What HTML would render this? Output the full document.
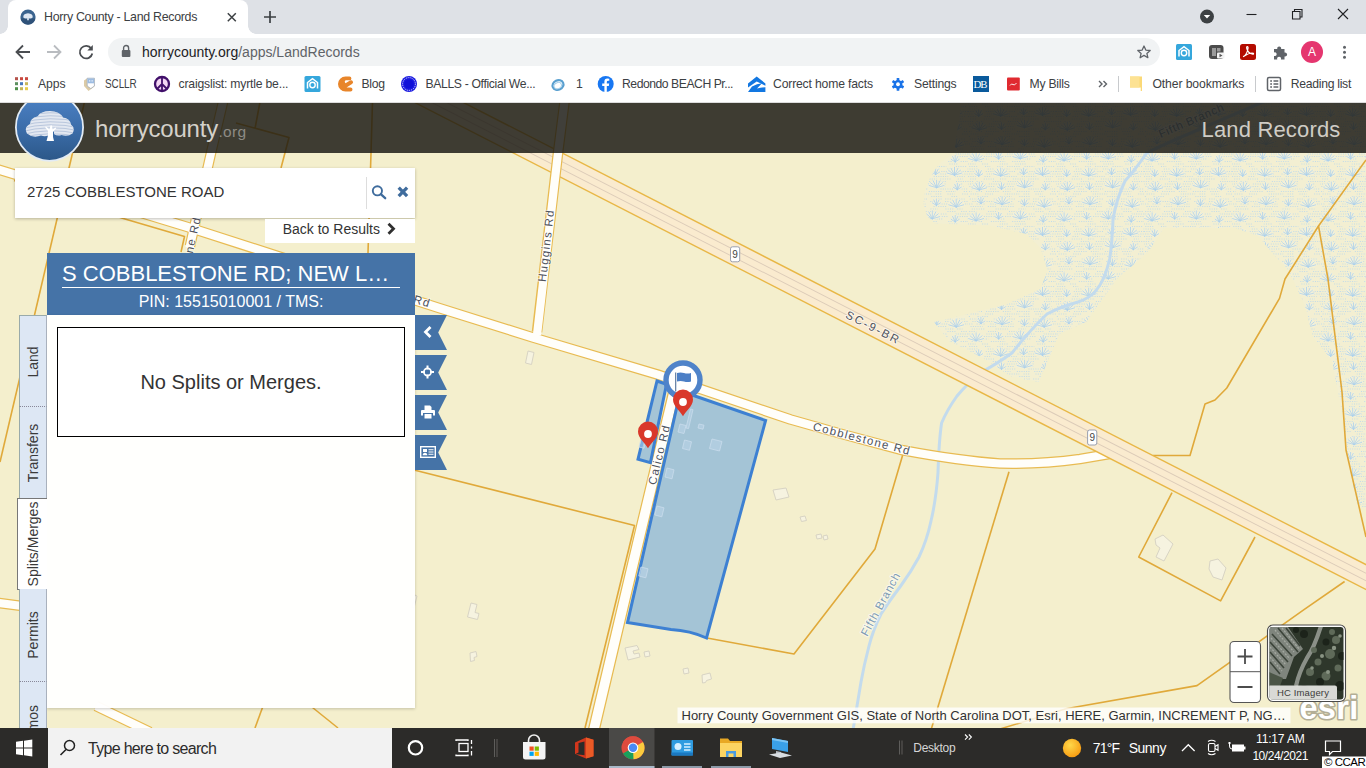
<!DOCTYPE html>
<html lang="en">
<head>
<meta charset="utf-8">
<title>Horry County - Land Records</title>
<style>
*{box-sizing:border-box;margin:0;padding:0}
html,body{width:1366px;height:768px;overflow:hidden;background:#f4efcd;font-family:"Liberation Sans",Arial,sans-serif}
body{position:relative}
.abs{position:absolute}
/* ---------- chrome ---------- */
#tabstrip{left:0;top:0;width:1366px;height:34px;background:#dee1e6}
#tab{left:8px;top:0;width:240px;height:34px;background:#fff;border-radius:8px 8px 0 0}
#tab:before,#tab:after{content:"";position:absolute;bottom:0;width:8px;height:8px;background:radial-gradient(circle at 0 0,rgba(255,255,255,0) 7.5px,#fff 8px)}
#tab:before{left:-8px}
#tab:after{right:-8px;transform:scaleX(-1)}
.ui{font-family:"Liberation Sans",Arial,sans-serif;color:#202124;white-space:nowrap}
#tabtitle{left:44px;top:10px;font-size:12.4px;color:#3c4043;letter-spacing:-0.3px}
#toolbar{left:0;top:34px;width:1366px;height:34px;background:#fff}
#omni{left:108px;top:38px;width:1052px;height:28px;border-radius:14px;background:#f1f3f4}
#url{left:142px;top:44px;font-size:14px;color:#202124;letter-spacing:-0.05px}
#url span{color:#5f6368}
#bookbar{left:0;top:68px;width:1366px;height:35px;background:#fff;border-bottom:1px solid #dcdcdc}
.bm{top:77px;font-size:12.2px;color:#3c4043;letter-spacing:-0.1px}
/* ---------- page ---------- */
#map{left:0;top:0;width:1366px;height:768px}
#hdr{left:0;top:103px;width:1366px;height:50px;background:rgba(22,21,16,.82)}
#brand{left:95px;top:114.500px;font-size:24px;color:#d4d1ca;letter-spacing:-0.22px}
#brand span{font-size:15.500px;color:#8d8b84;letter-spacing:0.3px;margin-left:0.5px}
#lr{right:25.500px;top:117px;font-size:22px;color:#cfccc5;letter-spacing:0.17px}
#search{left:15px;top:168px;width:400px;height:50px;background:#fff;box-shadow:0 1px 3px rgba(0,0,0,.25)}
#stext{left:27px;top:183px;font-size:15px;color:#333}
#sdiv{left:366px;top:177px;width:1px;height:32px;background:#ddd}
#back{left:265px;top:219px;width:150px;height:24px;background:#fff}
#backt{left:282.700px;top:221px;font-size:14px;color:#333}
#phead{left:47px;top:253px;width:368px;height:62px;background:#4573a7}
#ptitle{left:62px;top:260px;width:338px;height:28px;border-bottom:1px solid #fff;font-size:22px;color:#fff;line-height:27px;white-space:nowrap}
#ppin{left:47px;top:292px;width:368px;text-align:center;font-size:16px;color:#fff;line-height:20px}
#pbody{left:47px;top:315px;width:368px;height:393px;background:rgba(255,255,255,.96);box-shadow:0 1px 3px rgba(0,0,0,.2)}
#pbox{left:57px;top:327px;width:348px;height:110px;border:1px solid #000;background:#fff;text-align:center;line-height:108px;font-size:20px;color:#333}
.vtab{left:19px;width:28px;height:92px;background:#dde7f4;border-left:1px solid #9aa;border-right:1px solid #a9b1bd;border-top:1px dotted #889}
.vtab span,.vtabA span{position:absolute;left:50%;top:50%;transform:translate(-50%,-50%) rotate(-90deg);font-size:14px;color:#3a3a3a;white-space:nowrap}
.vtabA{left:17px;width:30px;height:92px;background:#fff;border:1px solid #777;border-right:none}
.flag{left:415px;width:32px;height:35px}
/* ---------- taskbar ---------- */
#task{left:0;top:728px;width:1366px;height:40px;background:#2c2b29}
#tsearch{left:48px;top:728px;width:344px;height:40px;background:#f2f2f2}
#tst{left:88px;top:739.500px;font-size:16px;color:#2b2b2b;letter-spacing:-0.7px}
.tt{color:#fff;font-size:12px;white-space:nowrap}
#b2{transform:scaleX(.815);transform-origin:0 0}
#b3{letter-spacing:-0.2px}
#b4{letter-spacing:-0.35px}
#b5{letter-spacing:-0.34px}
#b7{letter-spacing:-0.47px}
#b8{letter-spacing:-0.17px}
#b9{letter-spacing:-0.2px}
#b10{letter-spacing:-0.25px}
#b12{letter-spacing:-0.28px}
#url{letter-spacing:0}
</style>
</head>
<body>
<!-- MAP -->
<svg id="map" class="abs" viewBox="0 0 1366 768">
<rect x="0" y="0" width="1366" height="768" fill="#f4efcd"/>
<g id="mapcontent">
<defs>
<path id="hwy" d="M400,82.500 L1400,594.500"/>
<pattern id="marsh" x="0" y="0" width="88" height="60" patternUnits="userSpaceOnUse">
 <rect width="88" height="60" fill="#f1f0de" fill-opacity="0.250"/>
 <path d="M-0.5,1.5 h5.6 M8.6,1.5 h7.1 M24.8,1.5 h9.3 M39.9,1.5 h10.9 M57.9,1.5 h8.0 M76.0,1.5 h12.0 M-0.3,4.0 h10.3 M20.9,4.0 h12.3 M38.8,4.0 h14.8 M57.6,4.0 h9.2 M76.6,4.0 h6.5 M-5.6,6.5 h11.7 M16.0,6.5 h10.7 M37.6,6.5 h8.1 M55.0,6.5 h10.9 M74.1,6.5 h9.6 M3.4,9.0 h9.7 M22.2,9.0 h5.6 M37.1,9.0 h11.5 M60.5,9.0 h13.2 M79.3,9.0 h8.9 M-5.8,11.5 h9.6 M8.4,11.5 h6.2 M18.1,11.5 h12.7 M34.9,11.5 h7.5 M48.9,11.5 h13.7 M66.3,11.5 h9.5 M83.8,11.5 h13.8 M2.6,14.0 h7.8 M17.2,14.0 h8.6 M36.7,14.0 h14.6 M55.6,14.0 h6.8 M67.5,14.0 h7.3 M82.2,14.0 h10.9 M-6.0,16.5 h9.2 M9.6,16.5 h10.7 M31.8,16.5 h11.9 M51.3,16.5 h11.2 M71.6,16.5 h5.5 M1.8,19.0 h13.7 M25.7,19.0 h8.9 M41.2,19.0 h6.0 M56.0,19.0 h5.6 M65.2,19.0 h7.1 M76.8,19.0 h8.4 M-6.0,21.5 h6.5 M4.4,21.5 h8.6 M16.3,21.5 h13.7 M38.6,21.5 h6.5 M50.3,21.5 h8.5 M65.1,21.5 h6.2 M81.9,21.5 h14.9 M-1.2,24.0 h5.9 M8.6,24.0 h8.4 M22.4,24.0 h13.3 M40.2,24.0 h5.2 M57.0,24.0 h10.3 M71.6,24.0 h10.4 M85.2,24.0 h10.3 M2.6,26.5 h12.0 M19.9,26.5 h8.7 M33.1,26.5 h12.7 M53.6,26.5 h12.8 M72.4,26.5 h7.2 M3.8,29.0 h13.5 M27.6,29.0 h13.2 M50.5,29.0 h7.3 M65.4,29.0 h8.6 M77.2,29.0 h5.3 M-3.4,31.5 h11.9 M20.1,31.5 h9.5 M41.0,31.5 h14.9 M67.5,31.5 h8.6 M81.1,31.5 h7.3 M-4.0,34.0 h11.2 M18.4,34.0 h13.4 M39.1,34.0 h11.5 M60.8,34.0 h5.8 M75.6,34.0 h14.1 M1.5,36.5 h9.8 M15.9,36.5 h12.9 M34.8,36.5 h13.0 M59.5,36.5 h9.0 M75.1,36.5 h14.5 M-4.3,39.0 h6.3 M6.3,39.0 h14.0 M30.6,39.0 h6.5 M47.5,39.0 h14.8 M71.3,39.0 h8.5 M87.7,39.0 h6.3 M3.7,41.5 h11.5 M22.9,41.5 h14.3 M44.2,41.5 h13.7 M68.3,41.5 h7.1 M80.7,41.5 h7.9 M-0.1,44.0 h7.6 M14.2,44.0 h6.3 M31.7,44.0 h8.5 M47.4,44.0 h10.8 M69.4,44.0 h9.2 M-1.0,46.5 h10.3 M17.0,46.5 h5.2 M29.2,46.5 h6.8 M39.1,46.5 h13.0 M56.6,46.5 h9.7 M75.9,46.5 h10.6 M-0.8,49.0 h10.6 M19.8,49.0 h6.1 M33.9,49.0 h7.5 M46.9,49.0 h12.7 M67.2,49.0 h10.6 M87.6,49.0 h14.1 M0.1,51.5 h10.1 M17.8,51.5 h11.9 M36.8,51.5 h10.3 M54.4,51.5 h14.4 M78.1,51.5 h13.8 M-3.4,54.0 h10.6 M18.7,54.0 h13.4 M36.3,54.0 h6.2 M49.5,54.0 h5.7 M60.4,54.0 h5.7 M75.2,54.0 h12.8 M-4.5,56.5 h12.2 M16.6,56.5 h6.4 M34.0,56.5 h14.7 M53.7,56.5 h14.5 M74.8,56.5 h9.9 M2.3,59.0 h6.6 M15.8,59.0 h10.2 M32.0,59.0 h7.0 M44.9,59.0 h12.2 M60.3,59.0 h10.5 M77.8,59.0 h5.2" stroke="#bcd9ec" stroke-width="0.900" stroke-dasharray="1 1.300" fill="none"/>
 <path d="M11.3,10.0 l-7.5,-2.2 M11.3,10.0 l-6.0,-5.0 M11.3,10.0 l-3.5,-7.0 M11.3,10.0 l0.0,-8.0 M11.3,10.0 l3.5,-7.0 M11.3,10.0 l6.0,-5.0 M11.3,10.0 l7.5,-2.2 M56.6,7.7 l-7.5,-2.2 M56.6,7.7 l-6.0,-5.0 M56.6,7.7 l-3.5,-7.0 M56.6,7.7 l0.0,-8.0 M56.6,7.7 l3.5,-7.0 M56.6,7.7 l6.0,-5.0 M56.6,7.7 l7.5,-2.2 M34.1,24.6 l-7.5,-2.2 M34.1,24.6 l-6.0,-5.0 M34.1,24.6 l-3.5,-7.0 M34.1,24.6 l0.0,-8.0 M34.1,24.6 l3.5,-7.0 M34.1,24.6 l6.0,-5.0 M34.1,24.6 l7.5,-2.2 M76.2,27.0 l-7.5,-2.2 M76.2,27.0 l-6.0,-5.0 M76.2,27.0 l-3.5,-7.0 M76.2,27.0 l0.0,-8.0 M76.2,27.0 l3.5,-7.0 M76.2,27.0 l6.0,-5.0 M76.2,27.0 l7.5,-2.2 M8.1,40.8 l-7.5,-2.2 M8.1,40.8 l-6.0,-5.0 M8.1,40.8 l-3.5,-7.0 M8.1,40.8 l0.0,-8.0 M8.1,40.8 l3.5,-7.0 M8.1,40.8 l6.0,-5.0 M8.1,40.8 l7.5,-2.2 M52.3,38.8 l-7.5,-2.2 M52.3,38.8 l-6.0,-5.0 M52.3,38.8 l-3.5,-7.0 M52.3,38.8 l0.0,-8.0 M52.3,38.8 l3.5,-7.0 M52.3,38.8 l6.0,-5.0 M52.3,38.8 l7.5,-2.2 M32.7,56.0 l-7.5,-2.2 M32.7,56.0 l-6.0,-5.0 M32.7,56.0 l-3.5,-7.0 M32.7,56.0 l0.0,-8.0 M32.7,56.0 l3.5,-7.0 M32.7,56.0 l6.0,-5.0 M32.7,56.0 l7.5,-2.2 M74.5,55.2 l-7.5,-2.2 M74.5,55.2 l-6.0,-5.0 M74.5,55.2 l-3.5,-7.0 M74.5,55.2 l0.0,-8.0 M74.5,55.2 l3.5,-7.0 M74.5,55.2 l6.0,-5.0 M74.5,55.2 l7.5,-2.2" stroke="#f4f1da" stroke-width="2.400" fill="none" stroke-linecap="round"/>
 <path d="M33.5,9.3 l-4.0,-2.5 M33.5,9.3 l-2.6,-5.5 M33.5,9.3 l0.0,-6.5 M33.5,9.3 l2.6,-5.5 M33.5,9.3 l4.0,-2.5 M77.3,9.7 l-4.0,-2.5 M77.3,9.7 l-2.6,-5.5 M77.3,9.7 l0.0,-6.5 M77.3,9.7 l2.6,-5.5 M77.3,9.7 l4.0,-2.5 M12.9,23.6 l-4.0,-2.5 M12.9,23.6 l-2.6,-5.5 M12.9,23.6 l0.0,-6.5 M12.9,23.6 l2.6,-5.5 M12.9,23.6 l4.0,-2.5 M56.4,25.4 l-4.0,-2.5 M56.4,25.4 l-2.6,-5.5 M56.4,25.4 l0.0,-6.5 M56.4,25.4 l2.6,-5.5 M56.4,25.4 l4.0,-2.5 M30.6,38.9 l-4.0,-2.5 M30.6,38.9 l-2.6,-5.5 M30.6,38.9 l0.0,-6.5 M30.6,38.9 l2.6,-5.5 M30.6,38.9 l4.0,-2.5 M75.2,41.9 l-4.0,-2.5 M75.2,41.9 l-2.6,-5.5 M75.2,41.9 l0.0,-6.5 M75.2,41.9 l2.6,-5.5 M75.2,41.9 l4.0,-2.5 M10.7,56.2 l-4.0,-2.5 M10.7,56.2 l-2.6,-5.5 M10.7,56.2 l0.0,-6.5 M10.7,56.2 l2.6,-5.5 M10.7,56.2 l4.0,-2.5 M55.6,54.6 l-4.0,-2.5 M55.6,54.6 l-2.6,-5.5 M55.6,54.6 l0.0,-6.5 M55.6,54.6 l2.6,-5.5 M55.6,54.6 l4.0,-2.5" stroke="#f4f1da" stroke-width="2.200" fill="none" stroke-linecap="round"/>
 <path d="M11.3,10.0 l-7.5,-2.2 M11.3,10.0 l-6.0,-5.0 M11.3,10.0 l-3.5,-7.0 M11.3,10.0 l0.0,-8.0 M11.3,10.0 l3.5,-7.0 M11.3,10.0 l6.0,-5.0 M11.3,10.0 l7.5,-2.2 M56.6,7.7 l-7.5,-2.2 M56.6,7.7 l-6.0,-5.0 M56.6,7.7 l-3.5,-7.0 M56.6,7.7 l0.0,-8.0 M56.6,7.7 l3.5,-7.0 M56.6,7.7 l6.0,-5.0 M56.6,7.7 l7.5,-2.2 M34.1,24.6 l-7.5,-2.2 M34.1,24.6 l-6.0,-5.0 M34.1,24.6 l-3.5,-7.0 M34.1,24.6 l0.0,-8.0 M34.1,24.6 l3.5,-7.0 M34.1,24.6 l6.0,-5.0 M34.1,24.6 l7.5,-2.2 M76.2,27.0 l-7.5,-2.2 M76.2,27.0 l-6.0,-5.0 M76.2,27.0 l-3.5,-7.0 M76.2,27.0 l0.0,-8.0 M76.2,27.0 l3.5,-7.0 M76.2,27.0 l6.0,-5.0 M76.2,27.0 l7.5,-2.2 M8.1,40.8 l-7.5,-2.2 M8.1,40.8 l-6.0,-5.0 M8.1,40.8 l-3.5,-7.0 M8.1,40.8 l0.0,-8.0 M8.1,40.8 l3.5,-7.0 M8.1,40.8 l6.0,-5.0 M8.1,40.8 l7.5,-2.2 M52.3,38.8 l-7.5,-2.2 M52.3,38.8 l-6.0,-5.0 M52.3,38.8 l-3.5,-7.0 M52.3,38.8 l0.0,-8.0 M52.3,38.8 l3.5,-7.0 M52.3,38.8 l6.0,-5.0 M52.3,38.8 l7.5,-2.2 M32.7,56.0 l-7.5,-2.2 M32.7,56.0 l-6.0,-5.0 M32.7,56.0 l-3.5,-7.0 M32.7,56.0 l0.0,-8.0 M32.7,56.0 l3.5,-7.0 M32.7,56.0 l6.0,-5.0 M32.7,56.0 l7.5,-2.2 M74.5,55.2 l-7.5,-2.2 M74.5,55.2 l-6.0,-5.0 M74.5,55.2 l-3.5,-7.0 M74.5,55.2 l0.0,-8.0 M74.5,55.2 l3.5,-7.0 M74.5,55.2 l6.0,-5.0 M74.5,55.2 l7.5,-2.2" stroke="#acd0eb" stroke-width="0.800" fill="none" stroke-linecap="round"/>
 <path d="M33.5,9.3 l-4.0,-2.5 M33.5,9.3 l-2.6,-5.5 M33.5,9.3 l0.0,-6.5 M33.5,9.3 l2.6,-5.5 M33.5,9.3 l4.0,-2.5 M77.3,9.7 l-4.0,-2.5 M77.3,9.7 l-2.6,-5.5 M77.3,9.7 l0.0,-6.5 M77.3,9.7 l2.6,-5.5 M77.3,9.7 l4.0,-2.5 M12.9,23.6 l-4.0,-2.5 M12.9,23.6 l-2.6,-5.5 M12.9,23.6 l0.0,-6.5 M12.9,23.6 l2.6,-5.5 M12.9,23.6 l4.0,-2.5 M56.4,25.4 l-4.0,-2.5 M56.4,25.4 l-2.6,-5.5 M56.4,25.4 l0.0,-6.5 M56.4,25.4 l2.6,-5.5 M56.4,25.4 l4.0,-2.5 M30.6,38.9 l-4.0,-2.5 M30.6,38.9 l-2.6,-5.5 M30.6,38.9 l0.0,-6.5 M30.6,38.9 l2.6,-5.5 M30.6,38.9 l4.0,-2.5 M75.2,41.9 l-4.0,-2.5 M75.2,41.9 l-2.6,-5.5 M75.2,41.9 l0.0,-6.5 M75.2,41.9 l2.6,-5.5 M75.2,41.9 l4.0,-2.5 M10.7,56.2 l-4.0,-2.5 M10.7,56.2 l-2.6,-5.5 M10.7,56.2 l0.0,-6.5 M10.7,56.2 l2.6,-5.5 M10.7,56.2 l4.0,-2.5 M55.6,54.6 l-4.0,-2.5 M55.6,54.6 l-2.6,-5.5 M55.6,54.6 l0.0,-6.5 M55.6,54.6 l2.6,-5.5 M55.6,54.6 l4.0,-2.5" stroke="#acd0eb" stroke-width="0.800" fill="none" stroke-linecap="round"/>
</pattern>
<clipPath id="wetclip">
 <path d="M962,100 L954,153 L940,163 L930.500,176 L925,190 L923.500,204 L927,216 L935,223.500 L989,225.500 L1026.500,234 L1040.600,248 L1047.600,270 L1040.600,289 L1005.500,304.700 L960,316 L934,322 L949,341 L981,357 L1012,377 L1039,382 L1059,334 L1086,322 L1117,279 L1148,252 L1164,228 L1235,228 L1258,236 L1274,255 L1289,271 L1305,306 L1313,337 L1332,361 L1344,423 L1349,465 L1357,503 L1366,510 L1366,100 Z"/>
</clipPath>
</defs>
<rect x="900" y="100" width="466" height="420" fill="url(#marsh)" clip-path="url(#wetclip)"/>
<!-- stream -->
<path d="M1270,99 L1200,129 Q1160,146 1146.700,153 Q1135,170 1125,181 Q1116,200 1113,220 Q1112,245 1109.600,259 Q1105,280 1096,290.600 Q1090,298 1078,302 Q1060,307 1047,314 Q1030,330 1012,353 Q995,365 980.600,372.600 Q966,385 957,396 Q947,410 941.600,423 Q939,440 938,472.500 Q936,500 931,521 Q927,540 919,557 Q911,572 901,585.500 Q890,600 881,614 Q873,630 869,646 Q864,665 861,682 Q858,700 853,730" fill="none" stroke="#c3dbed" stroke-width="3" stroke-linecap="round"/>
<!-- parcel lines -->
<g fill="none" stroke="#e0a93a" stroke-width="1.6" stroke-linejoin="round">
 <path d="M84.500,102 L0,462"/>
 <path d="M372.500,102 L371,153 L368,253"/>
 <path d="M260,102 L255,128.500 M236,123 L289,137.500 L281,168"/>
 <path d="M415,470.200 L634.500,525.500 L585,728"/>
 <path d="M903,454 L875,549 L794,654 L707,638"/>
 <path d="M1009,471.700 L931,730"/>
 <path d="M1172,492.700 L1138.700,557 L1220.600,600.900 L1255,537"/>
 <path d="M1344.600,581.500 L1304,609.700 L1197,685.600 L1066,708.700 L1000,729"/>
 <path d="M1366,160 L1318.500,226 L1285,279 L1279.500,298.400 L1226.800,388 L1215,400 L1205,404 L1190,455.500 L1153,455.500"/>
 <path d="M1318.500,226 L1328,279 L1338,360 L1342,392 L1346,450 L1366,537"/>
 <path d="M262.500,707.500 L255,728"/>
 <path d="M14,180.500 L122.400,218.200 L184.500,236.500 L181,252"/>
 <path d="M312.500,707.500 L338,728"/>
</g>
<!-- minor roads -->
<g fill="none" stroke-linecap="butt" stroke-linejoin="round">
 <g stroke="#e8bb52" stroke-width="10.600">
  <path id="cob" d="M-20,164 L187.500,227 L439,308 L533,337.500 L657.800,374.600 L790.600,419.500 L840,433.500 L903,450.300 Q960,461 1000,463.500 Q1040,464.500 1080,459 L1124,451.500"/>
  <path d="M223,102 L211,153 L190,246"/>
  <path d="M-5,602.500 L22,606"/>
  <path d="M96,706 L150,732"/>
 </g>
 <g stroke="#fffefa" stroke-width="8.200">
  <use href="#cob"/>
  <path d="M223,102 L211,153 L189.500,248"/>
  <path d="M-5,602.500 L22,606"/>
  <path d="M96,706 L150,732"/>
 </g>
</g>
<g fill="none">
 <path d="M675,388 L642,525.700 L594.500,727 L590,746" stroke="#e8bb52" stroke-width="12"/>
 <path d="M675.500,386 L642,525.700 L594.500,727 L590,746" stroke="#fffefa" stroke-width="9.600"/>
</g>
<!-- highway -->
<g fill="none">
 <path d="M400,82.500 L1400,594.500" stroke="#e8b746" stroke-width="23.600"/>
 
 <use href="#hwy" stroke="#faebcf" stroke-width="20.800"/>
 <use href="#hwy" stroke="#dccbb8" stroke-width="7.600"/>
 <use href="#hwy" stroke="#faebcf" stroke-width="5.800"/>
</g>

<g fill="none">
 <path d="M565,98 L558,153 L537,332" stroke="#e8bb52" stroke-width="10.600"/>
 <path d="M565,98 L558,153 L537,335" stroke="#fffefa" stroke-width="8.200"/>
</g>
<!-- buildings -->
<g fill="#f6f3e0" stroke="#d8d4c4" stroke-width="1">
 <path d="M528,351 l6,1.500 l-2.500,12 l-6,-1.500 z"/>
 <path d="M773,490 l13,-2 l3,9 l-13,3 z"/>
 <path d="M800,517 l5,-1 l1.500,4.500 l-5,1 z"/>
 <path d="M816,535 l5,-1 l1,4 l-5,1 z M823,536 l4,-1 l1,4 l-4,1 z"/>
 <path d="M471,603 l6,1.500 l-2,8 l4,1 l-1.500,6 l-10,-2.500 z"/>
 <path d="M470,653 l6,-1.500 l1,5 l-3,1 l0.500,3 l-4,1 z"/>
 <path d="M625,648 l12,-2.500 l2,4 l-6,1.500 l1,3 l5,-1 l1,4 l-12,3 z"/>
 <path d="M644,652 l5,-1 l1,5 l-5,1 z"/>
 <path d="M683,669 l5,-1 l1,5 l-5,1 z"/>
 <path d="M702,675 l8,-2 l1.500,6 l-5,1.500 l-1,2 l-3,0.500 z"/>
 <path d="M1155,539 l8,-4 l10,9 l-9,17 l-8,-4 l4,-9 l-4,-3 z"/>
 <path d="M1210,561 l8,-2 l8,9 l-4,12 l-9,-3 l-4,-8 z"/>
 <path d="M415,595 l2,1 l-3,12 l-2,-0.500 z"/>
</g>
<!-- road labels -->
<g font-family="Liberation Sans, Arial, sans-serif" font-size="11.500" fill="#4f535c" stroke="#ffffff" stroke-opacity="0.600" stroke-width="2" paint-order="stroke" stroke-linejoin="round" letter-spacing="1.300" text-anchor="middle">
 <text transform="translate(550,246) rotate(-83.400)">Huggins Rd</text>
 <text transform="translate(861,442.500) rotate(14.500)">Cobblestone Rd</text>
 <text transform="translate(663,455.500) rotate(-76.500)">Calico Rd</text>
 <text transform="translate(871.500,331) rotate(27)" letter-spacing="2">SC-9-BR</text>
 <text transform="translate(421,305) rotate(17.500)">Rd</text>
 <text transform="translate(201,217.500) rotate(-77)" text-anchor="end">Lone Pine Rd</text>
 <text transform="translate(884,606) rotate(-61.500)" fill="#7f9cb4" letter-spacing="0.700">Fifth Branch</text>
 <text transform="translate(1193,124) rotate(-23.500)" fill="#7f9cb4" letter-spacing="0.700">Fifth Branch</text>
</g>
<!-- shields -->
<g font-family="Liberation Sans, Arial, sans-serif" font-size="10" fill="#444" text-anchor="middle">
 <rect x="730.500" y="246.800" width="9.200" height="15" rx="2" fill="#fff" stroke="#8e96a8" stroke-width="0.900"/>
 <text x="735.100" y="258">9</text>
 <rect x="1087.600" y="430" width="9.200" height="15" rx="2" fill="#fff" stroke="#8e96a8" stroke-width="0.900"/>
 <text x="1092.200" y="441.200">9</text>
</g>
<!-- selected parcels -->
<g fill="#6ea6dc" fill-opacity="0.600" stroke="#3d80d2" stroke-width="3" stroke-linejoin="miter">
 <path d="M680.500,391 L765.600,420.500 L706.500,638 Q690,630.500 671,629.500 L627.500,622.600 Z"/>
 <path d="M657,381 L666.500,384.300 L650.400,462.700 L638,459.300 Z"/>
</g>
<g fill="#bcd6ea" fill-opacity="0.550" stroke="#c9dcec" stroke-opacity="0.800" stroke-width="1">
 <path d="M699,424 l5,1.200 l-1,4 l-5,-1.200z"/>
 <path d="M684.500,440 l7,1.800 l-2,8.500 l-7,-1.800z"/>
 <path d="M712,439 l10,2.500 l-2.500,9.500 l-10,-2.500z"/>
 <path d="M680,424 l6,1.500 l-2,8 l-6,-1.500z"/>
 <path d="M667,468 l7,1.800 l-2,9 l-7,-1.800z"/>
 <path d="M690.500,409 l2.500,0.600 l-4.500,19 l-2.500,-0.600z"/>
 <path d="M657,506 l7,1.800 l-2.200,9 l-7,-1.800z"/>
 <path d="M641,567 l7,1.800 l-2.200,9 l-7,-1.800z"/>
 <path d="M641.500,437 l5,1.300 l-2.500,10 l-5,-1.300z"/>
</g>
<!-- flag marker -->
<g>
 <circle cx="683" cy="380" r="17" fill="#ffffff" stroke="#4f83c9" stroke-width="5.400"/>
 <rect x="675" y="372.500" width="1.300" height="19" fill="#6b85a8"/>
 <path d="M677,373 q3.500,-1.200 7,0 t7,0 v8.500 q-3.500,1.200 -7,0 t-7,0 z" fill="#4c7fc6"/>
</g>
<!-- pins -->
<g id="pins">
 <path id="pin" d="M0,0 C-2.500,-5 -10,-10 -10,-16.800 A10,10 0 1 1 10,-16.800 C10,-10 2.500,-5 0,0 Z" fill="#d9382b" transform="translate(683,416.300)"/>
 <circle cx="683" cy="402" r="3.900" fill="#fff"/>
 <use href="#pin" x="-35" y="32"/>
 <circle cx="648" cy="434" r="3.900" fill="#fff"/>
</g>
</g>
</svg>

<!-- page header -->
<div id="hdr" class="abs"></div>
<div id="brand" class="abs">horrycounty<span>.org</span></div>
<div id="lr" class="abs">Land Records</div>

<!-- search -->
<div id="search" class="abs"></div>
<div id="stext" class="abs">2725 COBBLESTONE ROAD</div>
<div id="sdiv" class="abs"></div>
<div id="back" class="abs"></div>
<div id="backt" class="abs">Back to Results</div>

<!-- panel -->
<div id="phead" class="abs"></div>
<div id="ptitle" class="abs">S COBBLESTONE RD; NEW L…</div>
<div id="ppin" class="abs">PIN: 15515010001 / TMS:</div>
<div id="pbody" class="abs"></div>
<div id="pbox" class="abs">No Splits or Merges.</div>
<div class="abs vtab" style="top:315px;border-top:1px solid #9aa"><span>Land</span></div>
<div class="abs vtab" style="top:406px"><span>Transfers</span></div>
<div class="abs vtabA" style="top:498px"><span>Splits/Merges</span></div>
<div class="abs vtab" style="top:589px;border-top:none"><span>Permits</span></div>
<div class="abs vtab" style="top:681px;height:47px;overflow:hidden"><span style="top:46px">Memos</span></div>


<!-- overlay icons -->
<svg class="abs" style="left:0;top:102px" width="1366" height="626" viewBox="0 102 1366 626">
 <defs>
  <linearGradient id="lg" x1="0" y1="0" x2="0" y2="1"><stop offset="0" stop-color="#4c82c6"/><stop offset="0.550" stop-color="#3b6ca8"/><stop offset="1" stop-color="#2b5788"/></linearGradient>
  <clipPath id="canopy"><path d="M27,133.500 q-3.500,-6 3,-9.500 q0,-6 7.500,-7.500 q3,-5.500 12.500,-5.500 q9.500,0 13,6.500 q7,1 8,7 q4.500,3.500 1.500,9 q-5,3.500 -11,1.500 q-4,1.500 -7.500,-1 l0,-3 q-2,1 -4,1 l0,2.500 q-4,3 -9,1 q-8,3 -14,-2z"/></clipPath>
 </defs>
 <circle cx="49.500" cy="127.200" r="33.600" fill="url(#lg)" stroke="#e2ebf5" stroke-width="1.800"/>
 <g clip-path="url(#canopy)">
  <rect x="20" y="105" width="60" height="40" fill="#e3e8f1"/>
  <g stroke="#b4c3da" stroke-width="0.900" fill="none">
   <path d="M20,117 q30,-8 60,-1 M20,120 q30,-8 60,-1 M20,123 q30,-8 60,-1 M20,126 q30,-8 60,-1 M20,129 q30,-8 60,-1 M20,132 q30,-8 60,-1 M20,135 q30,-8 60,-1 M20,138 q30,-8 60,-1 M20,114 q30,-8 60,-1"/>
  </g>
 </g>
 <path d="M46.500,141 q2,-5 1.500,-10 l-3,-4 l1,-0.500 l3.500,3 l1,-4 l1.500,0 l0.500,4 l3,-2 l0.800,0.800 l-3.300,3.700 q-0.500,5 1,9z" fill="#ffffff"/>
 <!-- search icons -->
 <circle cx="377.400" cy="190.800" r="4.600" fill="none" stroke="#3f6c9d" stroke-width="1.900"/>
 <path d="M380.800,194.200 l4.400,4" stroke="#3f6c9d" stroke-width="2.300" stroke-linecap="round"/>
 <path d="M398.700,187.700 l8.400,8.400 M407.100,187.700 l-8.400,8.400" stroke="#3f6c9d" stroke-width="3.300"/>
 <path d="M388.500,223.800 l5,5 l-5,5" stroke="#2f2f2f" stroke-width="2.800" fill="none"/>
 <!-- flag buttons -->
 <g fill="#4573a7">
  <path d="M415,315 h32 l-8.800,17.500 l8.800,17.500 h-32z"/>
  <path d="M415,355 h32 l-8.800,17.500 l8.800,17.500 h-32z"/>
  <path d="M415,395 h32 l-8.800,17.500 l8.800,17.500 h-32z"/>
  <path d="M415,435 h32 l-8.800,17.500 l8.800,17.500 h-32z"/>
 </g>
 <path d="M430.500,327 l-5,5 l5,5" stroke="#fff" stroke-width="2.800" fill="none"/>
 <g stroke="#fff" fill="none">
  <circle cx="427.500" cy="372" r="3.600" stroke-width="1.700"/>
  <path d="M427.500,365.500 v4 M427.500,374.500 v4 M421,372 h4 M430,372 h4" stroke-width="2"/>
 </g>
 <g fill="#fff">
  <path d="M424.500,405.500 h5.500 l1.500,1.500 v3 h-7z"/>
  <path d="M422,410 h12 q1,0 1,1 v4.500 h-2 v-2.500 h-10 v2.500 h-2 v-4.500 q0,-1 1,-1z"/>
  <path d="M424.500,414 h7 v4.500 h-7z"/>
 </g>
 <g>
  <rect x="420.700" y="446.700" width="14.600" height="10.600" fill="none" stroke="#fff" stroke-width="1.400"/>
  <path d="M423,449 h4 v3 h-4z M422.700,455.300 q0,-2.600 2.300,-2.600 q2.300,0 2.300,2.600z" fill="#fff"/>
  <path d="M428.500,449.700 h5 M428.500,452 h5 M428.500,454.300 h5" stroke="#fff" stroke-width="1.100"/>
 </g>
 <!-- zoom control -->
 <rect x="1230" y="641.500" width="30.500" height="61" rx="4" fill="#fff" stroke="#555" stroke-width="1.100"/>
 <path d="M1230,671.700 h30.500" stroke="#555" stroke-width="1"/>
 <path d="M1237.500,656.500 h15 M1245,649 v15 M1237.500,687 h15" stroke="#4c4c4c" stroke-width="1.800"/>
 <!-- esri -->
 <text x="1299.500" y="719.300" font-family="Liberation Sans, Arial, sans-serif" font-weight="bold" font-size="32.500" fill="#fff" stroke="#a29d87" stroke-opacity="0.800" stroke-width="3.200" paint-order="stroke" stroke-linejoin="round" letter-spacing="0.300">esri</text>
 <!-- basemap toggle -->
 <defs><clipPath id="bmclip"><rect x="1269.500" y="627" width="74" height="72.500" rx="3"/></clipPath></defs>
 <rect x="1267.500" y="625" width="78" height="76.500" rx="5.500" fill="#fff" stroke="#4a4a4a" stroke-width="1.100"/>
 <g clip-path="url(#bmclip)">
  <rect x="1269" y="626.500" width="75" height="74" fill="#2e372b"/>
  <path d="M1269,627 h19 l15,22 l-9,8 l-8,22 h-17z" fill="#7f857d"/>
  <g stroke="#3c443a" stroke-width="1.600" fill="none">
   <path d="M1272,634 l20,22 M1270,642 l18,20 M1270,652 l14,16 M1270,662 l10,12 M1278,628 l20,24 M1286,628 l14,18"/>
  </g>
  <g stroke="#a5aaa2" stroke-width="1.200" fill="none" stroke-dasharray="2 1.500">
   <path d="M1271,638 l19,21 M1270,647 l16,18 M1270,657 l12,14 M1282,628 l18,22 M1275,630 l19,22"/>
  </g>
  <path d="M1269,672 l14,6 l-3,8 h-11z" fill="#4b5546"/>
  <path d="M1321,626 q-7,22 -14,32 q-8,14 -11,28" stroke="#8b9088" stroke-width="4.200" fill="none"/>
  <g fill="#5f6a59">
   <circle cx="1310" cy="672" r="4"/><circle cx="1318" cy="662" r="3.500"/><circle cx="1330" cy="654" r="5"/><circle cx="1336" cy="640" r="4"/><circle cx="1326" cy="676" r="4.500"/><circle cx="1338" cy="668" r="3.500"/><circle cx="1314" cy="650" r="3"/><circle cx="1332" cy="632" r="3"/>
  </g>
  <g fill="#8a9484">
   <circle cx="1312" cy="668" r="1.800"/><circle cx="1322" cy="656" r="2"/><circle cx="1334" cy="648" r="2.200"/><circle cx="1328" cy="672" r="2"/><circle cx="1340" cy="636" r="1.800"/>
  </g>
  <g fill="#1c231a">
   <circle cx="1304" cy="634" r="4"/><circle cx="1296" cy="630" r="3"/><circle cx="1342" cy="656" r="4"/><circle cx="1320" cy="682" r="4"/><circle cx="1304" cy="690" r="5"/><circle cx="1340" cy="686" r="5"/><circle cx="1326" cy="642" r="3.500"/>
  </g>
 </g>
 <path d="M1269.500,685.500 h65.500 q2,0 2,2 v12 h-65 q-2.500,0 -2.500,-2.500z" fill="#f1f1ee" fill-opacity="0.880"/>
 <text x="1303" y="696.200" font-family="Liberation Sans, Arial, sans-serif" font-size="9.500" fill="#3c3c3c" text-anchor="middle" letter-spacing="0.150">HC Imagery</text>
 <!-- attribution -->
 <rect x="677.500" y="707.500" width="613" height="15.800" fill="#fff" fill-opacity="0.800"/>
</svg>
<div id="attr" class="abs ui" style="left:681.500px;top:707.500px;font-size:13px;color:#323232;line-height:16px">Horry County Government GIS, State of North Carolina DOT, Esri, HERE, Garmin, INCREMENT P, NG…</div>

<!-- chrome -->
<div id="tabstrip" class="abs"></div>
<div id="tab" class="abs"></div>
<div id="tabtitle" class="abs ui">Horry County - Land Records</div>
<div id="toolbar" class="abs"></div>
<div id="omni" class="abs"></div>
<div id="url" class="abs ui">horrycounty.org<span>/apps/LandRecords</span></div>
<div id="bookbar" class="abs"></div>


<!-- tab strip icons -->
<svg class="abs" style="left:0;top:0" width="1366" height="102" viewBox="0 0 1366 102">
 <!-- favicon -->
 <circle cx="28" cy="17" r="7.600" fill="#3b648f"/><path d="M20.600,18.500 a7.500,7.500 0 0 0 14.800,0z" fill="#2f5279"/>
 <path transform="translate(28,17.300) scale(0.820) translate(-26,-17.800)" d="M20.500,18.500 q-1,-4 3,-5 q2.500,-1.500 5,0 q4,1 3,5 q-2,1.500 -4.500,0.500 l0,2.500 h-2 l0,-2.500 q-2.500,1 -4.500,-0.500z" fill="#dfe8f3"/>
 <!-- tab close -->
 <path d="M227.800,13.200 l8,8 M235.800,13.200 l-8,8" stroke="#3c4043" stroke-width="1.500" fill="none"/>
 <!-- new tab -->
 <path d="M264,17 h12 M270,11 v12" stroke="#3c4043" stroke-width="1.700" fill="none"/>
 <!-- tab search -->
 <circle cx="1207" cy="16.600" r="7" fill="#3c4043"/>
 <path d="M1203.800,15 h6.400 l-3.200,3.600z" fill="#fff"/>
 <!-- window controls -->
 <path d="M1246.500,14.500 h10" stroke="#202124" stroke-width="1.100"/>
 <path d="M1292.500,11.500 h7.500 v7.500 h-7.500z M1294.500,11.500 v-2 h7.500 v7.500 h-2" stroke="#202124" stroke-width="1.100" fill="none"/>
 <path d="M1338,9 l10,10 M1348,9 l-10,10" stroke="#202124" stroke-width="1.100" fill="none"/>
 <!-- nav -->
 <g stroke="#4a4d51" stroke-width="1.800" fill="none">
  <path d="M30,52 H17 M23,45.500 L16.500,52 L23,58.500"/>
  <path d="M47,52 H60 M54,45.500 L60.500,52 L54,58.500" stroke="#b9bcc0"/>
  <path d="M91.300,48.500 A6.300,6.300 0 1 0 92.300,53.500"/>
 </g>
 <path d="M92.800,45 v5.500 h-5.500z" fill="#4a4d51"/>
 <!-- lock -->
 <rect x="121.800" y="50" width="8.600" height="7" rx="1" fill="#5f6368"/>
 <path d="M123.600,50 v-2 a2.500,2.500 0 0 1 5,0 v2" stroke="#5f6368" stroke-width="1.400" fill="none"/>
 <!-- star -->
 <path transform="translate(1144,52.300) scale(0.860) translate(-1144,-52.300)" d="M1144,45 l2.100,4.700 l5.100,0.500 l-3.850,3.400 l1.150,5 l-4.500,-2.700 l-4.500,2.700 l1.150,-5 l-3.850,-3.400 l5.100,-0.500z" stroke="#5f6368" stroke-width="1.500" fill="none" stroke-linejoin="round"/>
 <!-- ext: blue -->
 <rect x="1176" y="44" width="16" height="16" rx="1.500" fill="#35a7dc"/>
 <path d="M1179,56.500 v-6 l5,-3.800 l5,3.800 v6" stroke="#fff" stroke-width="1.500" fill="none"/>
 <circle cx="1184" cy="53" r="2.700" stroke="#fff" stroke-width="1.400" fill="none"/>
 <!-- ext: grey -->
 <rect x="1209" y="45" width="14.500" height="14" rx="3" fill="#4b4b4b"/>
 <path d="M1212,48 h4 v8 h-4z M1217,48 h3.500 v3.500 h-3.500z" fill="#9a9a9a"/>
 <rect x="1217" y="52.500" width="7.500" height="6" rx="1" fill="#f3f3f3"/>
 <path d="M1219.500,53.800 l3,1.700 l-3,1.700z" fill="#555"/>
 <!-- ext: red pdf -->
 <rect x="1240" y="44" width="16" height="16" rx="2.500" fill="#b30b00"/>
 <path d="M1243.500,56.500 q3.500,-2 4.500,-8 q0.300,-1.800 -0.700,-1.800 q-1,0 -0.500,2 q1,4.500 6,5.500 q1.200,0 0.500,-1 q-3,-1 -9.800,3.300z" stroke="#fff" stroke-width="1.200" fill="none" stroke-linejoin="round"/>
 <!-- puzzle -->
 <path d="M1274,49 h3.300 a2,2 0 1 1 3.800,0 h3.400 v3.600 a2,2 0 1 1 0,3.800 v3.100 h-3.600 a2,2 0 1 0 -3.600,0 h-3.300 v-3.600 a1.900,1.900 0 1 0 0,-3.500z" fill="#5f6368"/>
 <!-- avatar -->
 <circle cx="1312" cy="52" r="11" fill="#e5366f"/>
 <!-- menu -->
 <circle cx="1344.500" cy="47.300" r="1.500" fill="#5f6368"/><circle cx="1344.500" cy="52.300" r="1.500" fill="#5f6368"/><circle cx="1344.500" cy="57.300" r="1.500" fill="#5f6368"/>
 <!-- bookmark icons -->
 <g>
  <rect x="15" y="77.2" width="3" height="3" fill="#b5534b"/>
  <rect x="20" y="77.2" width="3" height="3" fill="#c9493f"/>
  <rect x="25" y="77.2" width="3" height="3" fill="#c9493f"/>
  <rect x="15" y="82.2" width="3" height="3" fill="#5c8f5f"/>
  <rect x="20" y="82.2" width="3" height="3" fill="#4878bd"/>
  <rect x="25" y="82.2" width="3" height="3" fill="#c9b659"/>
  <rect x="15" y="87.2" width="3" height="3" fill="#4f8f4a"/>
  <rect x="20" y="87.2" width="3" height="3" fill="#c4b45a"/>
  <rect x="25" y="87.2" width="3" height="3" fill="#e6cb4a"/>
 </g>
 <!-- scllr -->
 <path d="M84,80.500 l3.500,-2.500 h7 v8.500 l-6,4.500 l-4.500,-5z" fill="#dccba6"/>
 <path d="M87.200,78.200 h7.200 v7.800 l-3.600,2.600 l-3.600,-2.600z" fill="#fff" stroke="#9aa6b8" stroke-width="0.700"/>
 <path d="M87.500,78.500 h6.600 v4.800 h-6.600z" fill="#9dbce2"/>
 <path d="M89,80.200 h1.300 v1.300 h-1.300z M91.500,80.200 h1.300 v1.300 h-1.300z" fill="#e8f0fa"/>
 <!-- peace -->
 <circle cx="162" cy="84" r="7" fill="#f4d6f4" stroke="#41106a" stroke-width="2.300"/>
 <path d="M162,77 v14 M162,84 l-5,5 M162,84 l5,5" stroke="#41106a" stroke-width="1.800" fill="none"/>
 <!-- blue home cam -->
 <rect x="304.500" y="76" width="16" height="16" rx="1.500" fill="#35a7dc"/>
 <path d="M307.500,88.500 v-6 l5,-3.800 l5,3.800 v6" stroke="#fff" stroke-width="1.500" fill="none"/>
 <circle cx="312.500" cy="85" r="2.700" stroke="#fff" stroke-width="1.400" fill="none"/>
 <!-- blog e -->
 <path d="M345.500,76.500 a7.500,7.500 0 1 0 0,15 h5 a2,2 0 0 0 0,-4 h-4 l5.500,-3.500 a2,2 0 0 0 -2,-3.500 l-4.500,2.800 a2,2 0 0 1 0,-3 h4 a1.900,1.900 0 0 0 0,-3.800z" fill="#e8852a"/>
 <!-- balls -->
 <circle cx="409" cy="84" r="8" fill="#1a1ae0"/>
 <circle cx="409" cy="84" r="6.400" fill="none" stroke="#fff" stroke-width="0.800" stroke-dasharray="1.200 1"/>
 <circle cx="409" cy="84" r="4.600" fill="#1010d8"/>
 <!-- swirl -->
 <ellipse cx="558" cy="85" rx="5.600" ry="4.800" fill="none" stroke="#5aa0d0" stroke-width="2.200" transform="rotate(-25 558 85)"/>
 <ellipse cx="557.500" cy="85.500" rx="3.800" ry="3" fill="none" stroke="#a8d0ea" stroke-width="1" transform="rotate(-25 558 85)"/>
 <!-- facebook -->
 <circle cx="605.700" cy="84" r="8" fill="#1877f2"/>
 <path d="M606.800,92 v-6 h2 l0.400,-2.400 h-2.400 v-1.500 q0,-1.300 1.400,-1.300 h1.100 v-2.100 q-1,-0.200 -2,-0.200 q-2.900,0 -2.900,3 v2.100 h-2.200 v2.400 h2.200 v6z" fill="#fff"/>
 <!-- zillow -->
 <path d="M748,83.500 l8.700,-7 l8.700,7 v2.200 l-8.700,-4.200 l-8.700,6z" fill="#1277e1"/>
 <path d="M748,92 l4,-5.500 q5,-2.800 10,-3.300 l-5,5.400 q4,-1.400 8.400,-1.400 v4.800z" fill="#1277e1"/>
 <!-- gear -->
 <g transform="translate(898,84.300) scale(0.840)">
  <circle r="5.200" fill="#1a73e8"/>
  <g fill="#1a73e8"><rect x="-1.600" y="-7.600" width="3.200" height="15.200" rx="0.600"/><rect x="-1.600" y="-7.600" width="3.200" height="15.200" rx="0.600" transform="rotate(60)"/><rect x="-1.600" y="-7.600" width="3.200" height="15.200" rx="0.600" transform="rotate(120)"/></g>
  <circle r="2.300" fill="#fff"/>
 </g>
 <!-- DB -->
 <rect x="973" y="76" width="16" height="16" fill="#0a5a9c"/>
 <!-- red bills -->
 <rect x="1007" y="77.500" width="12.800" height="13" rx="1" fill="#e02a30"/>
 <path d="M1010,85.500 q1.500,-2.500 3,-1 t3.500,-1.500" stroke="#fff" stroke-width="0.900" fill="none"/>
 <!-- >> -->
 <path d="M1099,81 l3,3 l-3,3 M1103.500,81 l3,3 l-3,3" stroke="#5f6368" stroke-width="1.400" fill="none"/>
 <path d="M1118.500,76 v16 M1255.500,76 v16" stroke="#c8cacd" stroke-width="1"/>
 <!-- folder -->
 <path d="M1130,76.500 h12 v14.500 h-1.300 v-3.500 h-10.700z" fill="#fbd977"/>
 <path d="M1130,76.500 h9.500 v11 h-9.500z" fill="#fde293"/>
 <!-- reading list -->
 <rect x="1267.500" y="77.500" width="13" height="13" rx="1.500" fill="none" stroke="#5f6368" stroke-width="1.500"/>
 <path d="M1270.200,81 h1.800 M1273.500,81 h4.800 M1270.200,84 h1.800 M1273.500,84 h4.800 M1270.200,87 h1.800 M1273.500,87 h4.800" stroke="#5f6368" stroke-width="1.500"/>
</svg>
<div class="abs ui" style="left:1308px;top:45px;font-size:12px;color:#fff;width:8px;text-align:center">A</div>
<div class="abs ui" style="left:973.400px;top:77.800px;font-size:10.800px;color:#fff;font-family:'Liberation Serif',serif;letter-spacing:-0.900px">DB</div>
<div id="b1" class="abs ui bm" style="left:38px">Apps</div>
<div id="b2" class="abs ui bm" style="left:105.400px">SCLLR</div>
<div id="b3" class="abs ui bm" style="left:178.600px">craigslist: myrtle be...</div>
<div id="b4" class="abs ui bm" style="left:361.600px">Blog</div>
<div id="b5" class="abs ui bm" style="left:425.400px">BALLS - Official We...</div>
<div id="b6" class="abs ui bm" style="left:576px">1</div>
<div id="b7" class="abs ui bm" style="left:622px">Redondo BEACH Pr...</div>
<div id="b8" class="abs ui bm" style="left:773px">Correct home facts</div>
<div id="b9" class="abs ui bm" style="left:914px">Settings</div>
<div id="b10" class="abs ui bm" style="left:1029.500px">My Bills</div>
<div id="b11" class="abs ui bm" style="left:1152.400px">Other bookmarks</div>
<div id="b12" class="abs ui bm" style="left:1290.700px">Reading list</div>

<!-- taskbar -->
<div id="task" class="abs"></div>
<div id="tsearch" class="abs"></div>
<div id="tst" class="abs ui">Type here to search</div>
<svg class="abs" style="left:0;top:728px" width="1366" height="40" viewBox="0 728 1366 40">
 <!-- windows logo -->
 <path d="M16,741.800 l7,-1 v6.700 h-7z M24,740.700 l8.300,-1.200 v8 h-8.300z M16,748.500 h7 v6.700 l-7,-1z M24,748.500 h8.300 v8 l-8.300,-1.200z" fill="#fff"/>
 <!-- search icon -->
 <circle cx="69.500" cy="745.500" r="5" fill="none" stroke="#222" stroke-width="1.500"/>
 <path d="M66,749.500 l-5.500,5.500" stroke="#222" stroke-width="1.600"/>
 <!-- cortana -->
 <circle cx="415.500" cy="747.800" r="6.700" fill="none" stroke="#fff" stroke-width="2.200"/>
 <!-- task view -->
 <g stroke="#fff" stroke-width="1.300" fill="none">
  <rect x="459" y="743.500" width="9" height="8"/>
  <path d="M456,741 v-1 h12 v1 M456,754.500 v1 h12 v-1 M471.500,740 v4 M471.500,746.500 v2 M471.500,751 v4.500"/>
 </g>
 <path d="M494.500,739 v18 M497,739 v18" stroke="#5e5d5b" stroke-width="1"/>
 <!-- store -->
 <path d="M528.500,742 v-1.500 a5.500,5.500 0 0 1 11,0 v1.500" stroke="#f0f0f0" stroke-width="1.600" fill="none"/>
 <path d="M523,742 h22.500 v15 q0,2.500 -2.500,2.500 h-17.500 q-2.500,0 -2.500,-2.500z" fill="#f4f4f4"/>
 <rect x="529.500" y="746.500" width="4.200" height="4.200" fill="#f25022"/><rect x="534.700" y="746.500" width="4.200" height="4.200" fill="#7fba00"/><rect x="529.500" y="751.700" width="4.200" height="4.200" fill="#00a4ef"/><rect x="534.700" y="751.700" width="4.200" height="4.200" fill="#ffb900"/>
 <!-- office -->
 <path d="M575,742.500 l11,-5 l7.500,2.200 v16.600 l-7.500,2.200 l-11,-4.500 l9.500,1.200 v-13.700 l-6,1.500 v9.500 l-3.500,1.800z" fill="#d2361c"/>
 <path d="M586,737.500 l7.500,2.200 v16.600 l-7.500,2.200z" fill="#ea5a26"/>
 <!-- chrome active -->
 <rect x="609" y="728" width="45.500" height="40" fill="#4a4947"/>
 <rect x="609" y="766" width="45.500" height="2" fill="#a9b9c9"/>
 <circle cx="633" cy="747.800" r="11.500" fill="#dd4b3e"/>
 <path d="M633,747.800 L623,753.500 A11.500,11.500 0 0 0 633.500,759.300 L638.700,750z" fill="#1a9f5c"/>
 <path d="M633,747.800 L643,742 A11.500,11.500 0 0 1 633.500,759.300 z" fill="#fbcb3e"/>
 <path d="M623.040,742.050 A11.500,11.500 0 0 1 642.960,742.050 L633,742.050z" fill="#dd4b3e"/>
 <path d="M623.040,742.050 L628,750.700 L633,747.800z" fill="#dd4b3e"/>
 <circle cx="633" cy="747.800" r="5.300" fill="#fff"/>
 <circle cx="633" cy="747.800" r="4.200" fill="#4a8af4"/>
 <!-- app card -->
 <rect x="662" y="766" width="40" height="2" fill="#8c9aa8"/>
 <rect x="671.500" y="740" width="21.500" height="15.500" rx="1" fill="#2f9be0"/>
 <circle cx="678" cy="746.500" r="3.500" fill="#d6efff"/>
 <path d="M684,744 h6.500 M684,747 h6.500 M684,750 h6.500" stroke="#d6efff" stroke-width="1.300"/>
 <rect x="671.500" y="752.500" width="21.500" height="3" fill="#1b78c0"/>
 <!-- folder -->
 <rect x="711" y="766" width="40" height="2" fill="#8c9aa8"/>
 <path d="M720,738.500 h8 l2,2.500 h12 v16 h-22z" fill="#e8a824"/>
 <path d="M720,743 h22 v14 h-22z" fill="#fcd462"/>
 <path d="M726,751 h10 v6 h-10z" fill="#4a9be0"/>
 <path d="M728.500,753.500 h5 v3.500 h-5z" fill="#fcd462"/>
 <!-- pc -->
 <path d="M772,738 l16,3 v11 l-16,-3z" fill="#3aa0e8"/>
 <path d="M772,738 l16,3 v2 l-16,-3z" fill="#7cc4f4"/>
 <path d="M776,751 l5,1 v3 l-5,-1z" fill="#b8bec6"/>
 <path d="M769,754.500 l12,-2 l11,3 l-12,2.500z" fill="#d8dde2"/>
 <!-- desktop sep -->
 <path d="M899.500,740.500 v14 M902,740.500 v14" stroke="#5e5d5b" stroke-width="1"/>
 <path d="M965,734.500 l2.600,2.600 l-2.600,2.600 M968.800,734.500 l2.600,2.600 l-2.600,2.600" stroke="#fff" stroke-width="1.100" fill="none"/>
 <!-- sun -->
 <defs><radialGradient id="sun" cx="0.400" cy="0.350" r="0.700"><stop offset="0" stop-color="#ffd84a"/><stop offset="1" stop-color="#f79a10"/></radialGradient></defs>
 <circle cx="1072" cy="748" r="9.200" fill="url(#sun)"/>
 <!-- tray -->
 <path d="M1182,751 l6.300,-6.300 l6.300,6.300" stroke="#fff" stroke-width="1.300" fill="none"/>
 <g stroke="#fff" stroke-width="1.100" fill="none">
  <rect x="1208.500" y="743.500" width="6.500" height="8" rx="1.500"/>
  <path d="M1215,746.500 l3,-1.700 v5.500 l-3,-1.700 M1208,741.500 q3.500,-2.500 7.500,0 M1208,753.500 q3.500,2.500 7.500,0"/>
 </g>
 <g>
  <rect x="1232" y="744.500" width="12" height="7" fill="#fff"/>
  <rect x="1244" y="746.500" width="1.500" height="3" fill="#fff"/>
  <path d="M1229.500,742 v4 M1228,743 h3 M1229.500,746 q0,3 2.500,3" stroke="#fff" stroke-width="1" fill="none"/>
 </g>
 <path d="M1325.500,741 h15 v10.500 h-8 l-3,3 v-3 h-4z" stroke="#fff" stroke-width="1.200" fill="none"/>
 <rect x="1322" y="756.500" width="44" height="11.500" fill="#fff"/>
</svg>
<div id="k1" class="abs ui tt" style="left:913.300px;top:741px;color:#d6d6d6;font-size:12px;letter-spacing:-0.27px">Desktop</div>
<div id="k2" class="abs ui tt" style="left:1092.800px;top:740px;font-size:14px;letter-spacing:-0.85px">71°F</div>
<div id="k3" class="abs ui tt" style="left:1128.700px;top:740px;font-size:14px;letter-spacing:-0.5px">Sunny</div>
<div id="k4" class="abs ui tt" style="left:1256px;top:732px;font-size:12px;letter-spacing:-0.15px">11:17 AM</div>
<div id="k5" class="abs ui tt" style="left:1252.400px;top:748.500px;font-size:12px;letter-spacing:-0.46px">10/24/2021</div>
<div id="k6" class="abs ui" style="left:1324px;top:755.500px;font-size:11.500px;color:#000;line-height:13px;letter-spacing:-0.5px">© CCAR</div>

</body>
</html>
